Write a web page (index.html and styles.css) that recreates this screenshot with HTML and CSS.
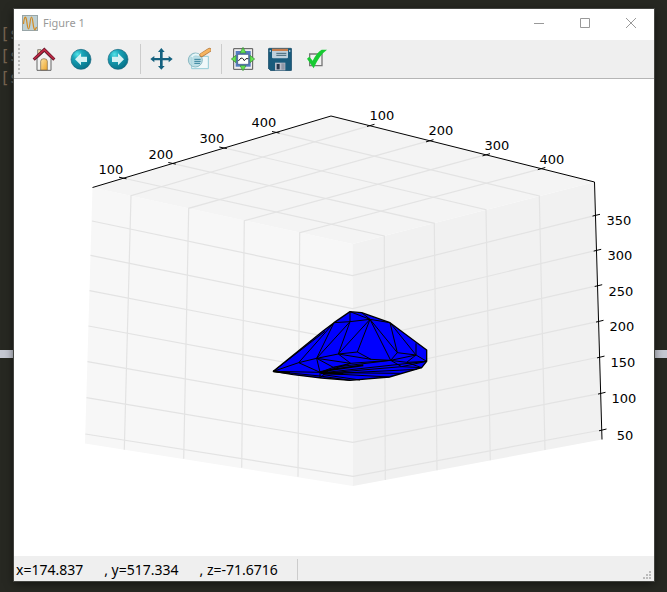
FILE: index.html
```html
<!DOCTYPE html>
<html lang="en">
<head>
<meta charset="utf-8">
<title>Figure 1</title>
<link rel="stylesheet" href="styles.css">
</head>
<body>
<div class="terminal" aria-hidden="true">
  <div class="prompt"><b>[</b>s</div>
  <div class="prompt"><b>[</b>s</div>
  <div class="prompt"><b>[</b>s</div>
  <div class="divider"></div>
</div>
<main class="window">
  <header class="titlebar">
    <svg class="app-icon" viewBox="0 0 16 16"><rect x=".5" y=".5" width="15" height="15" fill="#bfd0d2" stroke="#98a5a7"/><path d="M1.500 9C2.500 0 4 0 5 8s2 8 3 0 2-8 3 0 2 8 3.500 4" fill="none" stroke="#d28a22" stroke-width="1.2"/></svg>
    <h1 class="title">Figure 1</h1>
    <button class="caption" aria-label="Minimize"><svg viewBox="0 0 10 10"><path d="M0 5.5h10"/></svg></button>
    <button class="caption" aria-label="Maximize"><svg viewBox="0 0 10 10"><path d="M.5 .5h9v9h-9z"/></svg></button>
    <button class="caption" aria-label="Close"><svg viewBox="0 0 10 10"><path d="M0 0l10 10M10 0L0 10"/></svg></button>
  </header>
  <nav class="toolbar" aria-label="Figure tools">
    <span class="grip"></span>
    <button class="tool" aria-label="Home"><svg viewBox="0 0 72 72">
      <defs><linearGradient id="door" x2="1" y2="1"><stop stop-color="#fce2a4"/><stop offset="1" stop-color="#eea52a"/></linearGradient></defs>
      <path d="M17 8h10v20H17z" fill="#f7d9a5" stroke="#555" stroke-width="2"/>
      <path d="M15 34L37 14l20 20v36H15z" fill="#f1f2f2" stroke="#666" stroke-width="3"/>
      <path d="M26 69V43q0-8 10-8t10 8v26z" fill="url(#door)" stroke="#786245" stroke-width="2"/>
      <path d="M5 38L37 8l30 30" fill="none" stroke="#651426" stroke-width="9"/><path d="M6 36L37 8l29 28" fill="none" stroke="#bf2945" stroke-width="5"/>
    </svg></button>
    <button class="tool" aria-label="Back"><svg viewBox="0 0 72 72">
      <defs><radialGradient id="ball" cx=".32" cy=".25" r=".75"><stop stop-color="#52e4e8"/><stop offset=".35" stop-color="#18a3b7"/><stop offset="1" stop-color="#08758c"/></radialGradient></defs>
      <circle cx="36" cy="37" r="30" fill="url(#ball)" stroke="#17657d" stroke-width="2"/><path d="M18 37l18-18v10h18v16H36v10z" fill="#d5f1f3"/>
    </svg></button>
    <button class="tool" aria-label="Forward"><svg viewBox="0 0 72 72"><circle cx="36" cy="37" r="30" fill="url(#ball)" stroke="#17657d" stroke-width="2"/><path d="M54 37L36 19v10H18v16h18v10z" fill="#d5f1f3"/></svg></button>
    <span class="separator"></span>
    <button class="tool" aria-label="Pan"><svg viewBox="0 0 72 72"><path d="M34 3l10 12h-6v18h18v-6l12 9-12 10v-6H38v17h6L34 68 24 57h6V40H13v6L1 36l12-9v6h17V15h-6z" fill="#14617f"/></svg></button>
    <button class="tool" aria-label="Zoom to rectangle"><svg viewBox="0 0 72 72">
      <path d="M14 28h50v37H14z" fill="#eff8fa" stroke="#92cbd7" stroke-width="3"/>
      <circle cx="25" cy="39" r="21" fill="#b4dbe2" fill-opacity=".85" stroke="#8bb9c3" stroke-width="3"/>
      <path d="M14 30q8-12 22-5" fill="none" stroke="#e8f7f9" stroke-width="5"/>
      <path d="M22 37h19M22 43h19M22 49h17" stroke="#317f99" stroke-width="3"/>
      <path d="M44 24L67 9" stroke="#b27a43" stroke-width="13" stroke-linecap="round"/><path d="M44 23L67 9" stroke="#f5b461" stroke-width="9" stroke-linecap="round"/>
    </svg></button>
    <span class="separator"></span>
    <button class="tool" aria-label="Configure subplots"><svg viewBox="0 0 72 72">
      <path d="M8 5h57v62H8z" fill="#eee" stroke="#555" stroke-width="3"/><path d="M14 12h45v47H14z" fill="#537cc2"/><path d="M20 22h33v30H20z" fill="#fff" stroke="#304b78" stroke-width="2"/>
      <path d="M22 42l8-9 5 1 5 7 5-6h7" fill="none" stroke="#222" stroke-width="3"/>
      <path d="M36 1l9 17H27zM1 36l14-11v22zM71 36L57 25v22zM36 71l9-15H27z" fill="#62e54f" stroke="#39843b" stroke-width="2"/>
    </svg></button>
    <button class="tool" aria-label="Save"><svg viewBox="0 0 72 72">
      <path d="M4 4h65q2 0 2 3v61q0 3-3 3H8l-7-7V7q0-3 3-3z" fill="#195b7c" stroke="#174660" stroke-width="2"/>
      <path d="M12 9h48v22q0 3-3 3H15q-3 0-3-3z" fill="#bed0dc"/><path d="M12 5h48v7H12z" fill="#c77d4c"/>
      <path d="M25 19h30M25 25h30" stroke="#436576" stroke-width="3"/><path d="M5 12h4M63 12h4" stroke="#d3e1ed" stroke-width="4"/>
      <path d="M21 47h31v23H21z" fill="#b7bdc9"/><path d="M26 51h9v16h-9z" fill="#27384d"/><path d="M40 49h10v19H40z" fill="#8e98a8"/>
    </svg></button>
    <button class="tool" aria-label="Edit axes"><svg viewBox="0 0 72 72"><path d="M14 21h37v35H14z" fill="#f2f2f2" stroke="#777" stroke-width="4"/><path d="M6 35l7-6 10 12Q35 17 50 8h16Q42 25 26 64z" fill="#17ca32"/></svg></button>
  </nav>
  <section class="canvas">
    <svg class="plot" viewBox="14 79 640 477" role="img" aria-label="3D triangulated surface">
      <path d="M92.5 187.5L352.5 244 353 486 85 443.5z" fill="#f7f7f7"/>
      <path d="M352.5 244L594.5 182 602 439.5 353 486z" fill="#f1f1f1"/>
      <path d="M92.5 187.5L331 116 594.5 182 352.5 244z" fill="#f4f4f4"/>
      <g class="gridlines">
        <path d="M122.7 178L384.3 236 385.3 480M172 163.3L434.3 223.3 437 470.3M223 147.7L486 209.7 490.3 460.3M275.7 132.3L539.3 196 545 450"/>
        <path d="M370.7 125.3L131 195.7 124.3 449.7M429.7 140.7L188.7 208.3 183.7 458.7M486 154.7L244.3 220.7 241.7 467.7M541.3 168.7L299.7 232.7 298 476.7"/>
        <path d="M92 221L352.5 275.7 595.5 215.3M90.5 255.3L352.5 308.7 596.5 250.3M89.5 290.7L352.5 341.7 597.5 285.7M88.5 326L352.7 375 598.5 321.3M87.5 361.7L352.8 408.3 599.5 357M86.5 397.7L352.9 442.3 600.5 393.3M85.3 434L353 476.3 601.5 430"/>
      </g>
      <path class="axis" d="M92.5 187.5L331 116 594.5 182 602 439.5"/>
      <path class="axis" d="M119 177.2l7.5 1.6M168.3 162.5l7.5 1.6M219.3 147l7.5 1.6M272 131.5l7.5 1.6M367 126.5l7.5-2.2M426 141.9l7.5-2.2M482.5 155.9l7.5-2.2M537.8 169.7l7.5-2.2M592.5 216.1l7.5-1.8M593.7 251.1l7.5-1.8M594.7 286.5l7.5-1.8M596 322.1l7.5-1.8M597 357.9l7.5-1.8M598 394.1l7.5-1.8M599 430.8l7.5-1.8"/>
      <g class="ticks">
        <text x="111" y="174">100</text><text x="161" y="159">200</text><text x="212" y="143">300</text><text x="264" y="127">400</text>
        <text x="382" y="120">100</text><text x="441" y="135">200</text><text x="497" y="150">300</text><text x="552" y="164">400</text>
        <text x="619" y="225">350</text><text x="620" y="260">300</text><text x="621" y="296">250</text><text x="622" y="331">200</text><text x="623" y="367">150</text><text x="624" y="403">100</text><text x="625" y="440">50</text>
      </g>
      <svg x="260" y="300" width="180" height="90" viewBox="0 0 540 270" class="mesh">
        <path class="hull" d="M40 214L190 92 222 68 270 35 305 38 390 68 500 150V184L485 203 388 231 270 241 185 234 100 224z"/>
        <path d="M270 35V65L330 58 270 35M305 38L330 58 390 68M270 65L222 68 116 188M222 68L170 175 270 65 235 162 330 58 292 156M330 58L392 181M330 58L412 158 390 68 468 165V130M468 165L500 184"/>
        <path d="M40 214L116 188 170 175 235 162 292 156 333 178 392 181 468 165 412 158 392 181M40 214L195 94M170 175L180 217 116 188M170 175L220 202 272 190 235 162 333 178M170 175L272 190 392 181 440 187 468 165M392 181L425 200 500 184 440 187"/>
        <path d="M40 214L180 217V234L205 212M40 214L180 228 270 241M180 217L220 202 392 181M190 216L272 190M190 218L500 184M190 220L425 200 485 203 440 187M190 220L388 231M190 222L470 208M190 224L300 240M205 218L420 220"/>
        <path class="crease" d="M180 217L215 209 310 196M182 219L250 222M40 214L90 219"/>
      </svg>
    </svg>
  </section>
  <footer class="statusbar">
    <output class="coords"><span>x=174.837</span><span>, y=517.334</span><span>, z=-71.6716</span></output>
    <svg class="resize" viewBox="0 0 8 8"><path d="M6 0h2v2H6zM3 3h2v2H3zM6 3h2v2H6zM0 6h2v2H0zM3 6h2v2H3zM6 6h2v2H6z" fill="#bbb"/></svg>
  </footer>
</main>
</body>
</html>
```
FILE: styles.css
```css
* {
  box-sizing: border-box;
}

body {
  margin: 0;
  min-height: 100vh;
  padding: 9px 13px 11px 14px;
  display: flex;
  background: #272822;
  font-family: "Noto Sans", sans-serif;
}

/* Terminal visible behind the window */
.terminal {
  position: absolute;
  inset: 0;
  padding-top: 23px;
  overflow: hidden;
}

.prompt {
  height: 22px;
  font: 16px/22px "DejaVu Sans Mono", monospace;
  color: #6b6b62;
  white-space: nowrap;
}

.prompt b {
  font-weight: normal;
  color: #75634f;
}

.divider {
  position: absolute;
  top: 350px;
  left: 0;
  right: 0;
  height: 8px;
  background: #c5c8d2;
}

.window {
  position: relative;
  flex: 1;
  min-width: 0;
  display: flex;
  flex-direction: column;
  background: #fff;
  box-shadow: 0 0 0 1px #434440, 0 2px 9px #0009;
}

.titlebar {
  height: 31px;
  flex: none;
  display: flex;
  align-items: center;
  padding: 0 1px 3px 8px;
}

.app-icon {
  width: 16px;
  height: 16px;
}

.title {
  flex: 1;
  margin: 0 0 0 5px;
  font-size: 11px;
  font-weight: normal;
  line-height: 16px;
  color: #999;
}

button {
  border: 0;
  padding: 0;
  background: transparent;
}

.caption {
  width: 46px;
  height: 28px;
  display: flex;
  align-items: center;
  justify-content: center;
}

.caption:last-child {
  width: 45px;
}

.caption svg {
  width: 10px;
  height: 10px;
  fill: none;
  stroke: #999;
  overflow: visible;
}

.toolbar {
  height: 39px;
  flex: none;
  display: flex;
  align-items: center;
  background: #efefef;
  border-bottom: 1px solid #b5b5b5;
}

.grip {
  width: 2px;
  height: 31px;
  margin: 0 6px 0 4px;
  background: repeating-linear-gradient(#bdbdbd 0 2px, transparent 2px 4px);
}

.tool {
  width: 37px;
  height: 34px;
  display: flex;
  align-items: center;
  padding-left: 6px;
}

.tool svg {
  width: 24px;
  height: 24px;
}

.separator {
  width: 1px;
  height: 30px;
  margin: 0 3px;
  background: #ccc;
}

.canvas {
  flex: 1;
  min-height: 0;
  display: flex;
}

.plot {
  width: 100%;
  height: 100%;
}

.gridlines {
  fill: none;
  stroke: #e3e3e3;
  stroke-width: 1.2;
}

.axis {
  fill: none;
  stroke: #000;
  stroke-width: 1;
}

.ticks {
  font: 13px "DejaVu Sans", sans-serif;
  text-anchor: middle;
}

.mesh {
  fill: none;
  stroke: #000;
  stroke-width: 3;
  stroke-linejoin: round;
}

.hull {
  fill: #00f;
  stroke-width: 4;
}

.crease {
  stroke-width: 6;
}

.statusbar {
  height: 25px;
  flex: none;
  display: flex;
  align-items: center;
  justify-content: space-between;
  padding: 2px 3px 0 2px;
  background: #efefef;
}

.coords {
  display: flex;
  gap: 21px;
  padding-right: 19px;
  border-right: 1px solid #ccc;
  font-size: 14px;
  line-height: 21px;
  white-space: nowrap;
}

.resize {
  width: 8px;
  height: 8px;
  align-self: flex-end;
  margin-bottom: 2px;
}
```
